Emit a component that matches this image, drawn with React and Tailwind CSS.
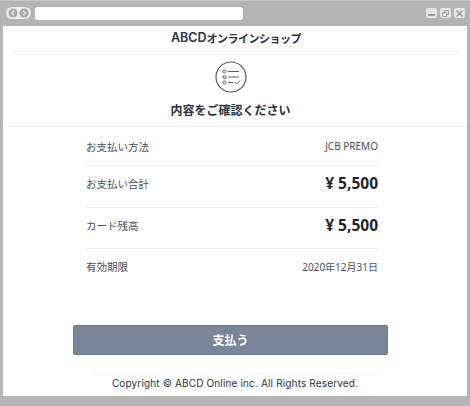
const rows = [
  { label: 'お支払い方法', value: 'JCB PREMO', big: false, row: 'h-[39px] pt-[1px] border-b border-[#edf1f7]' },
  { label: 'お支払い合計', value: '¥ 5,500', big: true, row: 'h-[42px] pb-[5px] border-b border-[#edf1f7]' },
  { label: 'カード残高', value: '¥ 5,500', big: true, row: 'h-[41px] pb-[4px] border-b border-[#edf1f7]' },
  { label: '有効期限', value: '2020年12月31日', big: false, row: 'h-[39px] pb-[3px]' },
]

function ListIcon() {
  return (
    <svg width="32" height="32" viewBox="0 0 32 32" fill="none" stroke="#555c66">
      <circle cx="16" cy="16" r="15" strokeWidth="1.2" />
      <g strokeWidth="1">
        <circle cx="9.5" cy="10.5" r="1.5" />
        <circle cx="9.5" cy="16" r="1.5" />
        <circle cx="9.5" cy="21.5" r="1.5" />
        <path d="M13 10.5h11M13 16h11M13 21.5h5" />
        <path d="M19.5 21l2 2 3.5-3.5" />
      </g>
    </svg>
  )
}

function WinButton({ children }) {
  return <div className="w-[11px] h-[10px] rounded-[2px] bg-[#e6e6e6] flex items-center justify-center">{children}</div>
}

export default function App() {
  return (
    <div className="w-[470px] h-[406px] bg-[#b4b4b4] flex flex-col overflow-hidden font-['Noto_Sans_CJK_JP','Noto_Sans',sans-serif] text-[#2b3240]">
      <div className="h-[26px] flex items-center pl-[6px] pr-[5px] pb-[1px] border-t border-[#c8c8c8]">
        <div className="w-[25px] h-[12px] rounded-full bg-[#eeeeee] flex items-center justify-center gap-[1px]">
          <svg width="10" height="10" viewBox="0 0 11 11"><circle cx="5.5" cy="5.5" r="5" fill="#a8a8a8" /><path d="M6.5 3L4 5.5 6.5 8" fill="none" stroke="#eee" strokeWidth="1.4" /></svg>
          <svg width="10" height="10" viewBox="0 0 11 11"><circle cx="5.5" cy="5.5" r="5" fill="#a8a8a8" /><path d="M4.5 3L7 5.5 4.5 8" fill="none" stroke="#eee" strokeWidth="1.4" /></svg>
        </div>
        <div className="ml-[4px] w-[208px] h-[13px] rounded-[3px] bg-white" />
        <div className="ml-auto flex gap-[3px]">
          <WinButton><div className="w-[7px] h-[2px] bg-[#9a9a9a] mt-[4px]" /></WinButton>
          <WinButton>
            <svg width="9" height="9" viewBox="0 0 9 9" fill="none" stroke="#9a9a9a"><path d="M3.5 3V1.5h4v4H6" /><path d="M1.5 3.5h4v4h-4z" /></svg>
          </WinButton>
          <WinButton>
            <svg width="9" height="9" viewBox="0 0 9 9" fill="none" stroke="#9a9a9a" strokeWidth="1.6"><path d="M1.5 1.5l6 6M7.5 1.5l-6 6" /></svg>
          </WinButton>
        </div>
      </div>

      <div className="mx-[3px] h-[370px] bg-white flex flex-col">
        <div className="mx-[7px] pl-[2px] h-[26px] border-b border-[#edf1f7] flex items-center justify-center font-semibold leading-none">
          <span className="text-[12.5px] font-['Inter',sans-serif]">ABCD</span>
          <span className="text-[11px] tracking-[-0.5px]">オンラインショップ</span>
        </div>
        <div className="h-[75px] pr-[9px] border-b border-[#edf1f7] flex flex-col items-center pt-[9px]">
          <ListIcon />
          <div className="mt-[8px] text-[12px] font-semibold leading-[18px]">内容をご確認ください</div>
        </div>

        <div className="ml-[83px] mr-[89px] flex flex-col">
          {rows.map((row, i) => (
            <div key={i} className={`${row.row} flex items-center justify-between`}>
              <span className="text-[10.5px] text-[#4a505c]">{row.label}</span>
              {row.big
                ? <span className="text-[15.5px] -mt-[1px] font-bold text-[#1f2530] font-['Noto_Sans','Noto_Sans_CJK_JP',sans-serif]">{row.value}</span>
                : <span className="text-[10px] text-[#4a505c] font-['Noto_Sans','Noto_Sans_CJK_JP',sans-serif]">{row.value}</span>}
            </div>
          ))}
        </div>

        <button className="mt-[37px] ml-[70px] mr-[79px] h-[30px] rounded-[2px] bg-[#788698] border border-[#6f7d90] text-white text-[12px] font-bold">
          支払う
        </button>

        <div className="mt-[18px] mx-[90px] border-t border-[#f1f3f7] pt-[2px] text-center text-[10px] leading-[14px] tracking-[0.15px] whitespace-nowrap font-['Inter',sans-serif] text-[#2b3240]">
          Copyright © ABCD Online inc. All Rights Reserved.
        </div>
      </div>
    </div>
  )
}
